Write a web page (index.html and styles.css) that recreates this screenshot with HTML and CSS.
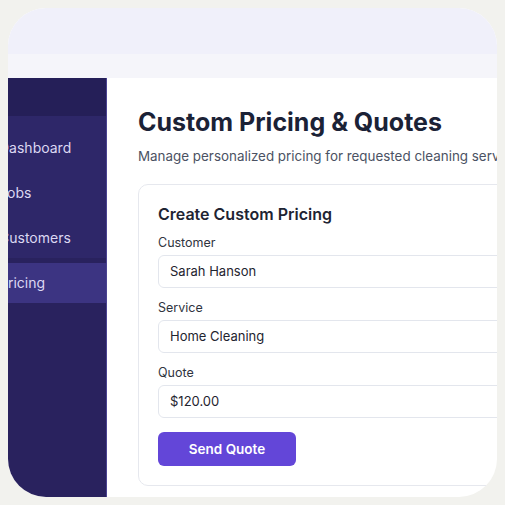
FILE: index.html
```html
<!DOCTYPE html>
<html>
<head>
<meta charset="utf-8">
<link rel="stylesheet" href="styles.css">
</head>
<body>
<div class="frame">
  <div class="topbar"></div>
  <div class="subbar"></div>
  <div class="app">
    <aside class="sidebar">
      <div class="sidebar-head"></div>
      <div class="nav-group">
        <div class="nav-item">Dashboard</div>
        <div class="nav-item">Jobs</div>
        <div class="nav-item">Customers</div>
      </div>
      <div class="nav-item active">Pricing</div>
    </aside>
    <main class="main">
      <h1 class="title">Custom Pricing &amp; Quotes</h1>
      <p class="subtitle">Manage personalized pricing for requested cleaning services and send quotes</p>
      <section class="card">
        <h2 class="card-title">Create Custom Pricing</h2>
        <div class="field">
          <label class="label">Customer</label>
          <div class="input">Sarah Hanson</div>
        </div>
        <div class="field">
          <label class="label">Service</label>
          <div class="input">Home Cleaning</div>
        </div>
        <div class="field">
          <label class="label">Quote</label>
          <div class="input">$120.00</div>
        </div>
        <button class="btn">Send Quote</button>
      </section>
    </main>
  </div>
</div>
</body>
</html>
```
FILE: styles.css
```css
* { box-sizing: border-box; }
html, body { margin: 0; padding: 0; }
body {
  background: #f2f2ee;
  font-family: "Inter", "Noto Sans", sans-serif;
  width: 505px;
  height: 505px;
  overflow: hidden;
}
.frame {
  margin: 8px;
  width: 489px;
  height: 489px;
  border-radius: 38px;
  overflow: hidden;
  display: flex;
  flex-direction: column;
  background: #ffffff;
}
.topbar { height: 46px; background: #f0f0fa; flex: none; }
.subbar { height: 24px; background: #f5f5fa; flex: none; }
.app { flex: 1; display: flex; min-height: 0; }
.sidebar {
  width: 99px;
  flex: none;
  background: #29225e;
  border-right: 1px solid #4b4392;
}
.sidebar-head { height: 38px; background: #251f58; }
.nav-group { background: #2e2769; padding-top: 12px; }
.nav-item {
  height: 40px;
  line-height: 40px;
  margin-bottom: 5px;
  margin-left: -9px;
  font-size: 14px;
  color: #dcd8f2;
  white-space: nowrap;
}
.nav-item.active { background: #3c3482; margin-left: 0; text-indent: -9px; margin-bottom: 0; }
.main {
  flex: 1;
  min-width: 0;
  overflow: hidden;
  padding: 28px 0 0 31px;
}
.title {
  margin: 0;
  font-size: 25px;
  line-height: 32px;
  font-weight: 700;
  color: #1b2236;
  white-space: nowrap;
}
.subtitle {
  margin: 8px 0 0;
  font-size: 13.4px;
  line-height: 20px;
  color: #4b5263;
  white-space: nowrap;
}
.card {
  margin-top: 18px;
  width: 420px;
  border: 1px solid #e6e8ee;
  border-radius: 10px;
  padding: 18px 20px 19px 19px;
}
.card-title {
  margin: 0 0 9px;
  font-size: 16px;
  line-height: 22px;
  font-weight: 600;
  color: #1e2433;
}
.field { margin-bottom: 11px; }
.label {
  display: block;
  font-size: 12.5px;
  line-height: 18px;
  color: #2f3440;
  margin-bottom: 3px;
}
.input {
  height: 33px;
  border: 1px solid #e3e6ed;
  border-radius: 6px;
  padding: 0 11px;
  font-size: 13px;
  line-height: 31px;
  color: #1f2430;
}
.btn {
  display: block;
  margin-top: 14px;
  width: 138px;
  height: 34px;
  border: none;
  border-radius: 6px;
  background: #6346d8;
  color: #ffffff;
  font-family: "Inter", "Noto Sans", sans-serif;
  font-size: 13.5px;
  font-weight: 600;
}
```
